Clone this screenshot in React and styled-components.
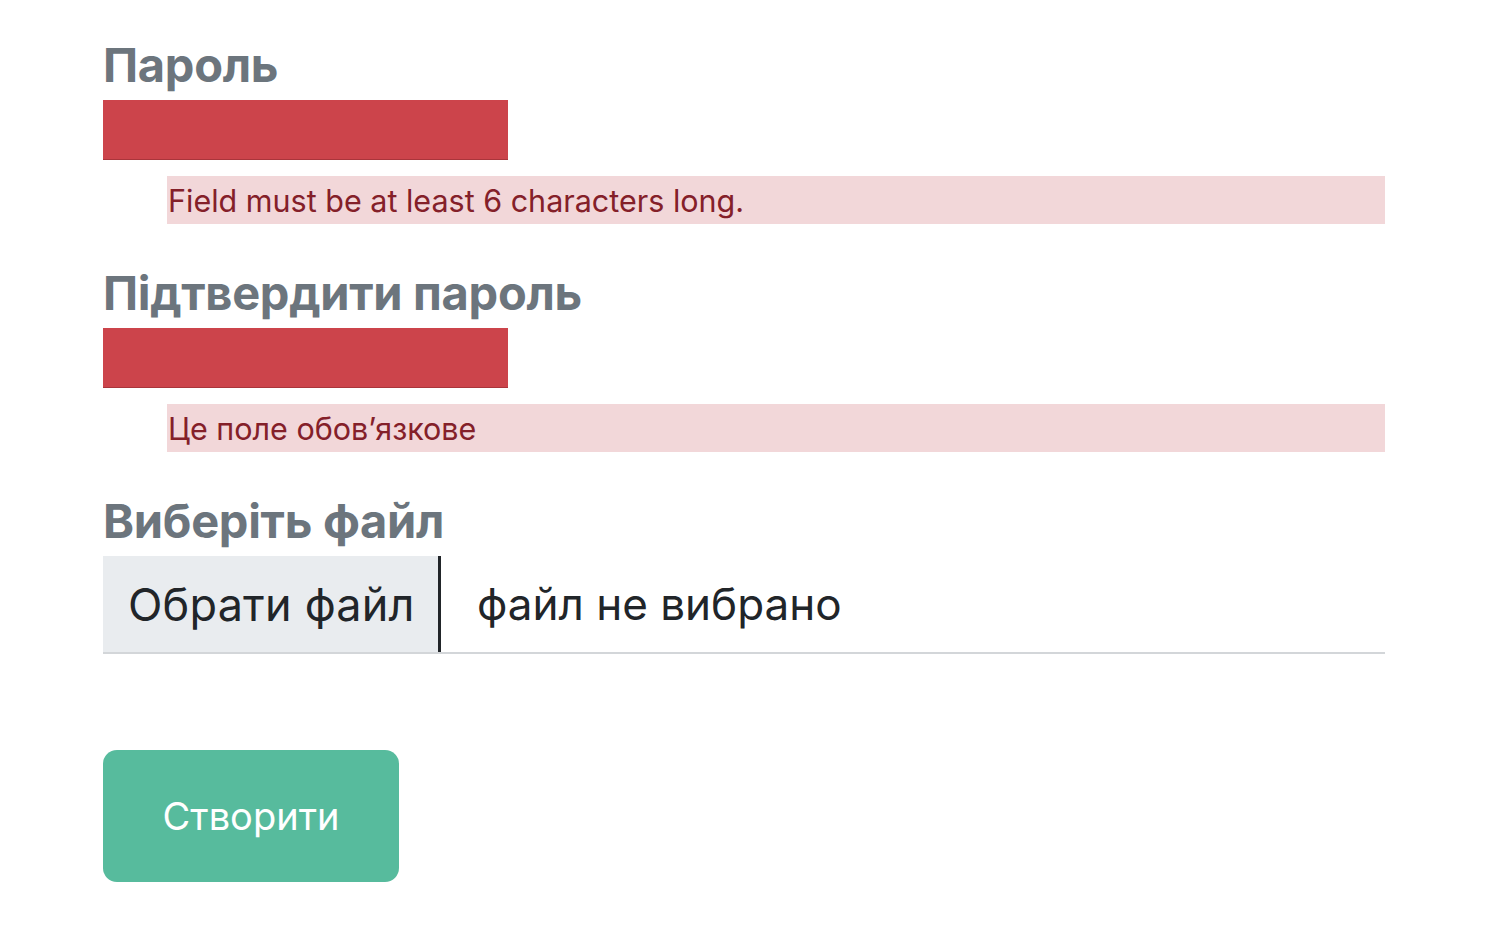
import React from "react";
import styled, { createGlobalStyle } from "styled-components";

const GlobalStyle = createGlobalStyle`
  body {
    margin: 0;
    background: #ffffff;
    font-family: Inter, "Noto Sans", sans-serif;
  }
`;

const Form = styled.form`
  width: 1282px;
  padding: 34px 0 0 103px;
  display: flex;
  flex-direction: column;
`;

const Group = styled.div`
  display: flex;
  flex-direction: column;
  margin-bottom: ${p => p.gap ?? 38}px;
`;

const Label = styled.label`
  font-size: 47px;
  font-weight: 700;
  line-height: 56px;
  color: #6c757d;
  letter-spacing: -0.3px;
  margin: 3px 0 7px;
`;

const BadInput = styled.div`
  width: 405px;
  height: 59px;
  background: #cc444b;
  border-bottom: 1px solid #a9353b;
`;

const ErrorText = styled.div`
  margin: 16px 0 0 64px;
  height: 48px;
  line-height: 50px;
  background: #f2d7d9;
  color: #842029;
  font-size: 30.5px;
  padding-left: 1px;
`;

const FileRow = styled.div`
  display: flex;
  align-items: center;
  height: 96px;
  border-bottom: 2px solid #d3d6d9;
`;

const FileButton = styled.div`
  height: 100%;
  display: flex;
  align-items: center;
  padding-left: 25px;
  width: 338px;
  flex-shrink: 0;
  box-sizing: border-box;
  white-space: nowrap;
  background: #e9ecef;
  border-right: 3px solid #212529;
  color: #212529;
  font-size: 45px;
  letter-spacing: 0.2px;
`;

const FileName = styled.div`
  padding-left: 36px;
  white-space: nowrap;
  color: #212529;
  font-size: 44px;
`;

const Submit = styled.button`
  margin-top: 96px;
  width: 296px;
  height: 132px;
  border: none;
  border-radius: 14px;
  background: #57bb9d;
  color: #ffffff;
  font-family: Inter, "Noto Sans", sans-serif;
  font-size: 38px;
  align-self: flex-start;
`;

export default function App() {
  return (
    <>
      <GlobalStyle />
      <Form onSubmit={e => e.preventDefault()}>
        <Group>
          <Label>Пароль</Label>
          <BadInput />
          <ErrorText>Field must be at least 6 characters long.</ErrorText>
        </Group>
        <Group>
          <Label>Підтвердити пароль</Label>
          <BadInput />
          <ErrorText>Це поле обовʼязкове</ErrorText>
        </Group>
        <Group gap={0}>
          <Label>Виберіть файл</Label>
          <FileRow>
            <FileButton>Обрати файл</FileButton>
            <FileName>файл не вибрано</FileName>
          </FileRow>
        </Group>
        <Submit type="submit">Створити</Submit>
      </Form>
    </>
  );
}
